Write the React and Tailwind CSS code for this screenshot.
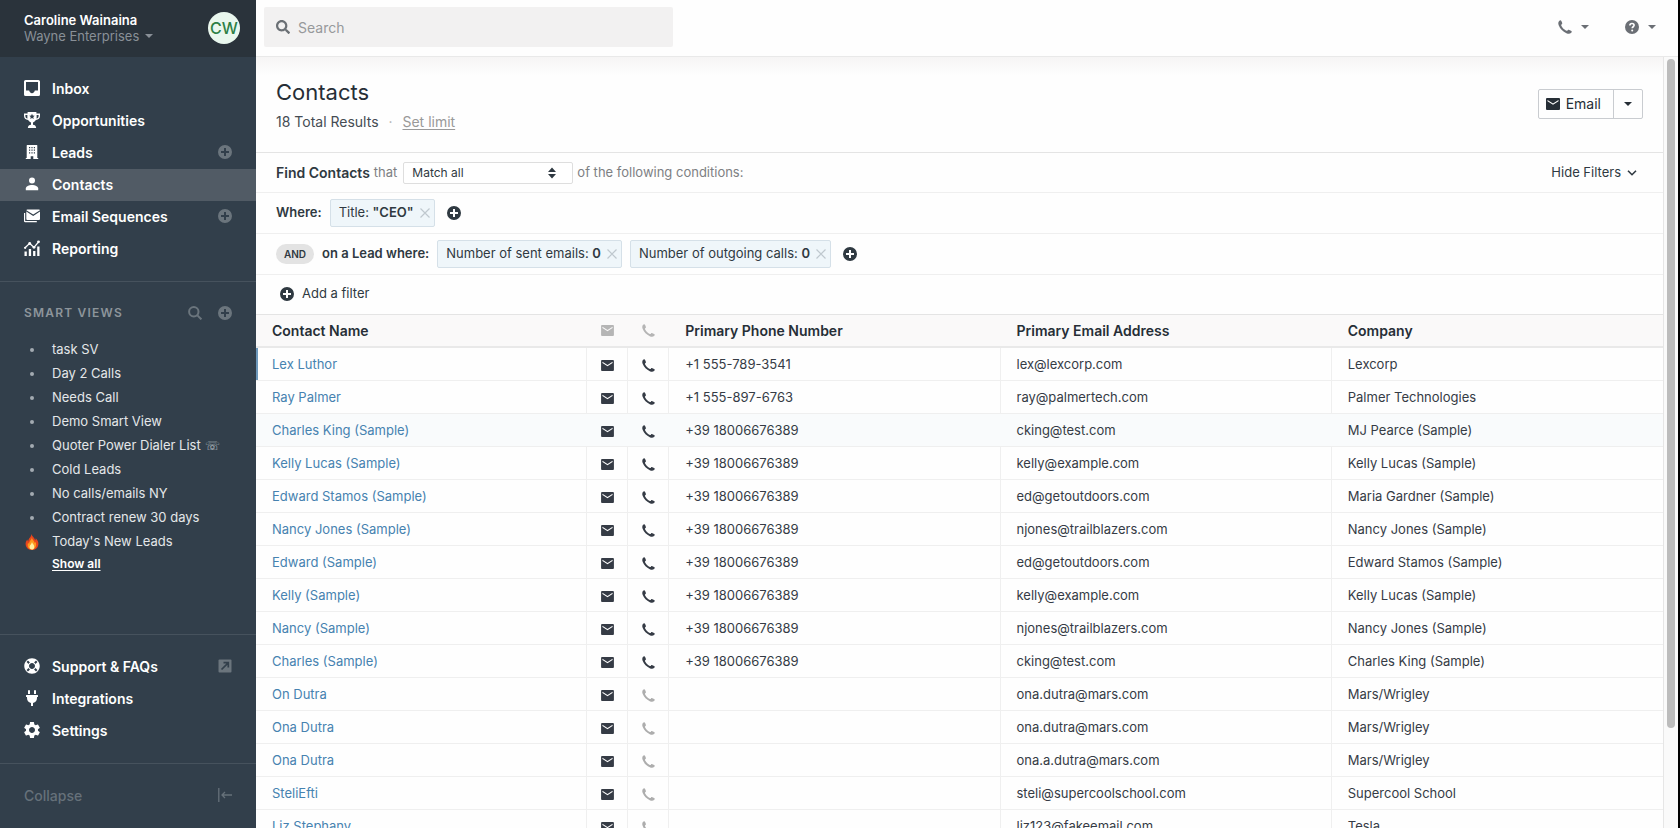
import React from 'react';
import { FaLifeRing, FaPlug, FaSearch } from 'react-icons/fa';
import { MdSettings } from 'react-icons/md';

const SMART_VIEWS = [
  { name: 'task SV' },
  { name: 'Day 2 Calls' },
  { name: 'Needs Call' },
  { name: 'Demo Smart View' },
  { name: 'Quoter Power Dialer List', dialer: true },
  { name: 'Cold Leads' },
  { name: 'No calls/emails NY' },
  { name: 'Contract renew 30 days' },
  { name: "Today's New Leads", hot: true },
];

const CONTACTS = [
  { name: 'Lex Luthor', phone: '+1 555-789-3541', email: 'lex@lexcorp.com', company: 'Lexcorp', active: true },
  { name: 'Ray Palmer', phone: '+1 555-897-6763', email: 'ray@palmertech.com', company: 'Palmer Technologies' },
  { name: 'Charles King (Sample)', phone: '+39 18006676389', email: 'cking@test.com', company: 'MJ Pearce (Sample)', hover: true },
  { name: 'Kelly Lucas (Sample)', phone: '+39 18006676389', email: 'kelly@example.com', company: 'Kelly Lucas (Sample)' },
  { name: 'Edward Stamos (Sample)', phone: '+39 18006676389', email: 'ed@getoutdoors.com', company: 'Maria Gardner (Sample)' },
  { name: 'Nancy Jones (Sample)', phone: '+39 18006676389', email: 'njones@trailblazers.com', company: 'Nancy Jones (Sample)' },
  { name: 'Edward (Sample)', phone: '+39 18006676389', email: 'ed@getoutdoors.com', company: 'Edward Stamos (Sample)' },
  { name: 'Kelly (Sample)', phone: '+39 18006676389', email: 'kelly@example.com', company: 'Kelly Lucas (Sample)' },
  { name: 'Nancy (Sample)', phone: '+39 18006676389', email: 'njones@trailblazers.com', company: 'Nancy Jones (Sample)' },
  { name: 'Charles (Sample)', phone: '+39 18006676389', email: 'cking@test.com', company: 'Charles King (Sample)' },
  { name: 'On Dutra', phone: '', email: 'ona.dutra@mars.com', company: 'Mars/Wrigley' },
  { name: 'Ona Dutra', phone: '', email: 'ona.dutra@mars.com', company: 'Mars/Wrigley' },
  { name: 'Ona Dutra', phone: '', email: 'ona.a.dutra@mars.com', company: 'Mars/Wrigley' },
  { name: 'SteliEfti', phone: '', email: 'steli@supercoolschool.com', company: 'Supercool School' },
  { name: 'Liz Stephany', phone: '', email: 'liz123@fakeemail.com', company: 'Tesla' },
];

const InboxIcon = () => (
  <svg viewBox="0 0 16 16" className="size-4" fill="currentColor">
    <path fillRule="evenodd" d="M1.6 0h12.8A1.6 1.6 0 0 1 16 1.6v12.8a1.6 1.6 0 0 1-1.6 1.6H1.6A1.6 1.6 0 0 1 0 14.4V1.6A1.6 1.6 0 0 1 1.6 0zM2 2v8.6h3.2c.2 1.5 1.300 2.600 2.800 2.600s2.600-1.100 2.800-2.600H14V2z" />
  </svg>
);

const TrophyIcon = () => (
  <svg viewBox="0 0 16 16" className="size-4" fill="currentColor">
    <path
      fillRule="evenodd"
      d="M3.600 0h8.800v1.500H16v2.300c0 2.400-1.500 4-4.100 4.300-.8 1.300-1.700 2-2.900 2.300v2.400c1.700.2 2.900 1 3.200 3.200H3.800c.3-2.200 1.500-3 3.200-3.200v-2.400c-1.200-.3-2.100-1-2.900-2.300C1.500 7.800 0 6.200 0 3.800V1.500h3.600zM1.400 2.900v1c0 1.300.7 2.200 2.100 2.600C3.300 5.500 3.300 4.200 3.400 2.900zm13.200 0h-2c.1 1.300.1 2.600-.1 3.600 1.400-.4 2.100-1.300 2.100-2.600zM8 1.800l-.8 1.700-1.900.2 1.400 1.300-.4 1.900L8 6l1.700.9-.4-1.900 1.400-1.300-1.900-.2z"
    />
  </svg>
);

const BuildingIcon = () => (
  <svg viewBox="0 0 16 16" className="size-4" fill="currentColor">
    <path
      fillRule="evenodd"
      d="M3.200 1h9.600a.5.500 0 0 1 .5.5V14h.9v1H9.300v-2.800H6.700V15H1.800v-1h.9V1.500a.5.500 0 0 1 .5-.5zM5 3v1.200h1.200V3zm2.400 0v1.200h1.200V3zm2.400 0v1.200H11V3zM5 5.600v1.200h1.200V5.600zm2.400 0v1.200h1.200V5.600zm2.400 0v1.200H11V5.600zM5 8.200v1.200h1.200V8.200zm2.400 0v1.200h1.200V8.200zm2.400 0v1.200H11V8.200z"
    />
  </svg>
);

const PersonIcon = () => (
  <svg viewBox="0 0 16 16" className="size-4" fill="currentColor">
    <circle cx="8" cy="4.500" r="3" />
    <path d="M1.800 14.200v-1.700c0-2.300 3.200-3.500 6.200-3.500s6.200 1.200 6.200 3.500v1.700z" />
  </svg>
);

const SequenceIcon = () => (
  <svg viewBox="0 0 16 16" className="size-4" fill="currentColor">
    <path d="M0 5h1.200v8h11.600v1.200H1.200A1.200 1.200 0 0 1 0 13z" />
    <path d="M2.300 3.500V11a1 1 0 0 0 1 1H15a1 1 0 0 0 1-1V3.500L9.200 8z" />
    <path d="M3.300 1.500H15c.5 0 .8.2 1 .7L9.200 6.600 2.300 2.200c.2-.5.500-.7 1-.7z" />
  </svg>
);

const ReportIcon = () => (
  <svg viewBox="0 0 16 16" className="size-4" fill="currentColor">
    <path d="M.5 11.500h2.300V16H.5zM4.800 9h2.300v7H4.800zM9.100 11h2.300v5H9.100zM13.200 6.500h2.300V16h-2.300z" />
    <path d="M.5 8.300 5.700 3.400l4.300 4 4.600-5.600" fill="none" stroke="currentColor" strokeWidth="1.300" />
    <circle cx="5.700" cy="3.500" r="1.400" />
    <circle cx="10" cy="7.300" r="1.400" />
    <circle cx="14.500" cy="1.800" r="1.400" />
    <circle cx="1.200" cy="7.800" r="1.100" />
  </svg>
);

const PlusCircle = () => (
  <svg viewBox="0 0 14 14" className="size-[14px]" fill="currentColor">
    <path fillRule="evenodd" d="M7 0a7 7 0 1 1 0 14A7 7 0 0 1 7 0zM6 3v3H3v2h3v3h2V8h3V6H8V3z" />
  </svg>
);

const PhoneIcon = ({ className }) => (
  <svg viewBox="0 0 14 14" className={className} fill="currentColor">
    <path d="M1.200.9C2.200-.2 3 .2 3.600 1.600c.6 1.400 1 2 .1 2.700-.7.6-.7.8-.1 1.900 1 1.800 2.400 3.200 4.300 4.200 1.100.6 1.200.6 1.800-.2.600-.7 1.200-.5 2.700.2 1.500.7 1.800 1.200.8 2.300-1.200 1.300-2.800 1.400-4.800.5C4.800 11.600 2.200 9 .8 5.500 0 3.400.1 2.100 1.200.9z" />
  </svg>
);

const MailIcon = ({ className }) => (
  <svg viewBox="0 0 14 12" className={className} fill="currentColor">
    <path fillRule="evenodd" d="M1 0h12a1 1 0 0 1 1 1v10a1 1 0 0 1-1 1H1a1 1 0 0 1-1-1V1a1 1 0 0 1 1-1zm.5 1.900v1.400L7 6.800l5.500-3.500V1.900L7 5.400z" />
  </svg>
);

const Caret = () => (
  <svg viewBox="0 0 8 4" className="h-1 w-2" fill="currentColor">
    <path d="M0 0h8L4 4z" />
  </svg>
);

const HelpIcon = () => (
  <svg viewBox="0 0 14 14" className="size-[14px]">
    <circle cx="7" cy="7" r="7" fill="currentColor" />
    <path d="M4.900 5.500c0-1.300.9-2 2.100-2s2.100.7 2.100 1.800c0 1.400-1.900 1.500-1.900 2.900" fill="none" stroke="#fff" strokeWidth="1.600" />
    <circle cx="7.200" cy="10.500" r="1" fill="#fff" />
  </svg>
);

const FlameIcon = () => (
  <svg viewBox="0 0 14 16" className="h-4 w-[14px]">
    <path d="M6.500 0c.5 2.500 3 3.600 3.700 6.200.5-.5.600-1.300.5-2 2 1.800 3.100 4 2.600 6.800-.6 3.200-3.200 5-6.300 5s-5.800-1.900-6.300-5C.3 8.600 1.300 6.800 2.400 5.500c.1.900.3 1.500.9 2C3.100 4.500 6.400 3 6.500 0z" fill="#e8451c" />
    <path d="M6.800 3.500c.3 2.200 2.600 3.300 3 5.600.5-.3.600-.8.700-1.300 1.700 3.600-.2 7.600-3.500 7.600s-5.300-3.200-3.900-6.700c.3.600.6.900 1.100 1.100C4 7 6.700 6 6.800 3.500z" fill="#fb9a1e" />
    <path d="M7 8c.2 1.700 2.500 2.600 2.300 4.900-.1 1.600-1 2.700-2.400 2.700s-2.400-1.200-2.300-2.800C4.700 11 6.800 10 7 8z" fill="#fff0a0" />
  </svg>
);

const NavItem = ({ icon, label, active, action }) => (
  <div className={`flex h-8 items-center px-6 pb-[2px] ${active ? 'bg-[#515b65]' : ''}`}>
    <a href="#" className="flex flex-1 items-center gap-3 text-[14px] font-semibold text-white">
      <span className="flex w-4 justify-center">{icon}</span>
      {label}
    </a>
    {action}
  </div>
);

const AddButton = ({ label }) => (
  <button type="button" aria-label={label} className="text-[#6b757d]">
    <PlusCircle />
  </button>
);

const Sidebar = () => (
  <aside className="flex w-64 shrink-0 flex-col bg-[#323f4b] text-white">
    <div className="flex h-[57px] items-center justify-between bg-[#2a333b] pr-4 pb-[2px] pl-6">
      <div className="text-[13px] leading-4">
        <div className="font-semibold">Caroline Wainaina</div>
        <button type="button" className="flex items-center gap-[6px] text-[#899097]">
          Wayne Enterprises <Caret />
        </button>
      </div>
      <div className="flex size-8 items-center justify-center rounded-full bg-[#e9f7ee] text-[16px] font-medium text-[#2c7f45]">CW</div>
    </div>

    <nav className="border-b border-[#46525d] py-4">
      <NavItem icon={<InboxIcon />} label="Inbox" />
      <NavItem icon={<TrophyIcon />} label="Opportunities" />
      <NavItem icon={<BuildingIcon />} label="Leads" action={<AddButton label="Add lead" />} />
      <NavItem icon={<PersonIcon />} label="Contacts" active />
      <NavItem icon={<SequenceIcon />} label="Email Sequences" action={<AddButton label="Add sequence" />} />
      <NavItem icon={<ReportIcon />} label="Reporting" />
    </nav>

    <section className="flex-1 pt-4">
      <div className="flex h-8 items-center gap-4 px-6 pb-[2px]">
        <h2 className="flex-1 text-[12px] font-semibold tracking-widest text-[#8d959b]">SMART VIEWS</h2>
        <button type="button" aria-label="Search smart views" className="text-[#6b757d]">
          <svg viewBox="0 0 14 14" className="size-[14px]" fill="none" stroke="currentColor" strokeWidth="2">
            <circle cx="5.800" cy="5.800" r="4.700" />
            <path d="m9.400 9.400 4 4" />
          </svg>
        </button>
        <AddButton label="Add smart view" />
      </div>
      <ul className="pt-2">
        {SMART_VIEWS.map((view) => (
          <li key={view.name} className="flex h-6 items-center gap-3 pl-6 text-[13px] text-[#e4e7e9]">
            <span className="flex w-4 justify-center">
              {view.hot ? <FlameIcon /> : <span className="size-1 rounded-full bg-[#a3abb1]" />}
            </span>
            <a href="#">
              {view.name}
              {view.dialer && <span className="ml-1 text-[12px] text-[#b9c0c5]">☏</span>}
            </a>
          </li>
        ))}
      </ul>
      <a href="#" className="ml-[52px] block w-fit text-[12px] leading-5 font-semibold underline underline-offset-2">
        Show all
      </a>
    </section>

    <div className="border-y border-[#46525d] py-4">
      <NavItem
        icon={<FaLifeRing className="size-4" />}
        label="Support & FAQs"
        action={
          <svg viewBox="0 0 14 14" className="size-[14px]">
            <rect x=".5" y=".5" width="13" height="13" rx="1" fill="#6b757d" />
            <path d="m3.500 10.500 6.200-6.200M5.500 3.700h4.800v4.800" fill="none" stroke="#323f4b" strokeWidth="1.700" />
          </svg>
        }
      />
      <NavItem icon={<FaPlug className="size-4" />} label="Integrations" />
      <NavItem icon={<MdSettings className="size-5 shrink-0" />} label="Settings" />
    </div>
    <button type="button" className="flex h-16 items-center justify-between px-6 pb-[2px] text-[14px] font-medium text-[#66717a]">
      Collapse
      <svg viewBox="0 0 14 14" className="size-[14px]" fill="none" stroke="currentColor" strokeWidth="1.300">
        <path d="M.8 0v14M4 7h10M7 4 4 7l3 3" />
      </svg>
    </button>
  </aside>
);

const TopBar = () => (
  <header className="flex h-[57px] shrink-0 items-center justify-between border-b border-[#e9e9e9] pr-[22px] pb-[2px] pl-2">
    <label className="flex h-10 w-[409px] items-center gap-2 rounded-xs bg-[#f2f1f1] px-3 text-[#6b7075]">
      <FaSearch className="size-[14px]" />
      <input type="text" aria-label="Search" placeholder="Search" className="flex-1 bg-transparent text-[14px] outline-none placeholder:text-[#97999b]" />
    </label>
    <div className="flex items-center gap-9 text-[#6b6f75]">
      <button type="button" aria-label="Calls" className="flex items-center gap-[9px]">
        <PhoneIcon className="size-[14px]" />
        <Caret />
      </button>
      <button type="button" aria-label="Help" className="flex items-center gap-[9px]">
        <HelpIcon />
        <Caret />
      </button>
    </div>
  </header>
);

const FilterChip = ({ label, value }) => (
  <span className="flex h-7 items-center rounded-xs border border-[#d5e0e8] bg-[#eff6fa] pr-1 pl-2 text-[13px]">
    {label}&nbsp;<b className="font-semibold">{value}</b>
    <button type="button" aria-label={`Remove ${label}`} className="ml-[6px] text-[#bfc8ce]">
      <svg viewBox="0 0 10 10" className="size-[10px]" fill="none" stroke="currentColor" strokeWidth="1.200">
        <path d="m.5.5 9 9M9.500.5l-9 9" />
      </svg>
    </button>
  </span>
);

const Filters = () => (
  <section className="text-[13px] text-[#2f3941]">
    <div className="flex h-10 items-center border-t border-[#e4e4e4] px-5">
      <label htmlFor="match" className="text-[14px] font-semibold">Find Contacts</label>
      <span className="ml-1 text-[#7d8083]">that</span>
      <span className="relative mr-1 ml-[6px] flex">
        <select id="match" className="h-[22px] w-[170px] appearance-none rounded-xs border border-[#dedede] bg-white px-2 text-[12px]">
          <option>Match all</option>
        </select>
        <svg viewBox="0 0 8 11" className="pointer-events-none absolute top-[5px] right-[17px] h-3 w-2" fill="currentColor">
          <path d="M4 0l4 4.500H0zM4 11 0 6.500h8z" />
        </svg>
      </span>
      <span className="text-[#7d8083]">of the following conditions:</span>
      <button type="button" className="mr-[6px] ml-auto flex items-center gap-[6px]">
        Hide Filters
        <svg viewBox="0 0 10 6" className="h-[6px] w-[10px]" fill="none" stroke="currentColor" strokeWidth="1.600">
          <path d="m1 .7 4 4 4-4" />
        </svg>
      </button>
    </div>
    <div className="flex h-[41px] items-center gap-2 border-t border-[#efefef] px-5">
      <span className="font-semibold">Where:</span>
      <FilterChip label="Title:" value={'"CEO"'} />
      <button type="button" aria-label="Add condition" className="ml-1">
        <PlusCircle />
      </button>
    </div>
    <div className="flex h-[41px] items-center gap-2 border-t border-[#efefef] px-5">
      <span className="flex h-5 items-center rounded-full bg-[#e3e3e3] px-2 text-[10px] font-semibold">AND</span>
      <span className="font-semibold">on a Lead where:</span>
      <FilterChip label="Number of sent emails:" value="0" />
      <FilterChip label="Number of outgoing calls:" value="0" />
      <button type="button" aria-label="Add lead condition" className="ml-1">
        <PlusCircle />
      </button>
    </div>
    <div className="flex h-10 items-center border-t border-[#efefef] px-6 pb-[2px]">
      <button type="button" className="flex items-center gap-2">
        <PlusCircle />
        Add a filter
      </button>
    </div>
  </section>
);

const ContactsTable = () => (
  <table className="w-full table-fixed border-separate border-spacing-0 text-left text-[13px] text-[#353b45]">
    <colgroup>
      <col />
      <col className="w-[41px]" />
      <col className="w-[41px]" />
      <col />
      <col />
      <col />
    </colgroup>
    <thead>
      <tr className="h-[34px] bg-[#faf9f9] text-[14px] text-[#262e36] *:border-t *:border-b-2 *:border-t-[#e4e4e4] *:border-b-[#e9e9e9] *:font-semibold">
        <th className="px-4">Contact Name</th>
        <th aria-label="Email"><MailIcon className="mx-auto h-[11px] w-[13px] text-[#b5b5b5]" /></th>
        <th aria-label="Call"><PhoneIcon className="mx-auto size-[13px] text-[#b5b5b5]" /></th>
        <th className="px-4">Primary Phone Number</th>
        <th className="px-4">Primary Email Address</th>
        <th className="px-4">Company</th>
      </tr>
    </thead>
    <tbody>
      {CONTACTS.map((c, i) => (
        <tr
          key={i}
          className={`h-[33px] *:border-b *:border-b-[#efefef] *:pt-[2px] ${c.hover ? 'bg-[#f9fbfc]' : '*:not-last:border-r *:not-last:border-r-[#efefef]'}`}
        >
          <td className={`px-4 ${c.active ? 'shadow-[inset_2px_0_0_#6d98bb]' : ''}`}>
            <a href="#" className="text-[#4682b0]">{c.name}</a>
          </td>
          <td>
            <button type="button" aria-label="Send email" className="mx-auto block">
              <MailIcon className="h-[11px] w-[13px]" />
            </button>
          </td>
          <td>
            <button type="button" aria-label="Call contact" disabled={!c.phone} className={`mx-auto block ${c.phone ? '' : 'text-[#adadad]'}`}>
              <PhoneIcon className="size-[13px]" />
            </button>
          </td>
          <td className="px-4">{c.phone}</td>
          <td className="px-4">{c.email}</td>
          <td className="px-4">{c.company}</td>
        </tr>
      ))}
    </tbody>
  </table>
);

const App = () => {
  return (
    <div className="flex h-screen overflow-hidden border-r-2 border-black bg-[#fefefe] font-['Inter',sans-serif]">
      <Sidebar />
      <div className="flex min-w-0 flex-1 flex-col">
        <TopBar />
        <div className="flex min-h-0 flex-1">
          <main className="min-w-0 flex-1 overflow-hidden">
            <div className="flex h-[95px] items-center justify-between bg-linear-to-b from-[#f6f5f5] to-[#fefefe] to-20% px-5 pb-[2px]">
              <div className="text-[#262e36]">
                <h1 className="text-[22px] leading-8">Contacts</h1>
                <p className="mt-1 text-[14px] leading-5 text-[#454c53]">
                  18 Total Results <span className="mx-[6px] text-[#b0b0b0]">·</span>{' '}
                  <a href="#" className="text-[#999] underline underline-offset-2">Set limit</a>
                </p>
              </div>
              <div className="flex h-[30px] rounded-xs border border-[#c9ccd0] text-[14px] text-[#262e36]">
                <button type="button" className="flex items-center gap-[6px] px-[7px] pr-3">
                  <MailIcon className="h-3 w-[14px]" />
                  Email
                </button>
                <button type="button" aria-label="More email options" className="flex w-[29px] items-center justify-center border-l border-[#c9ccd0]">
                  <Caret />
                </button>
              </div>
            </div>
            <Filters />
            <ContactsTable />
          </main>
          <div className="w-[15px] border-l border-[#e6e6e6] bg-[#fafafa] pt-[2px]">
            <div className="mx-auto h-[87%] w-2 rounded-full bg-[#bcbcbc]" />
          </div>
        </div>
      </div>
    </div>
  );
};

export default App;
